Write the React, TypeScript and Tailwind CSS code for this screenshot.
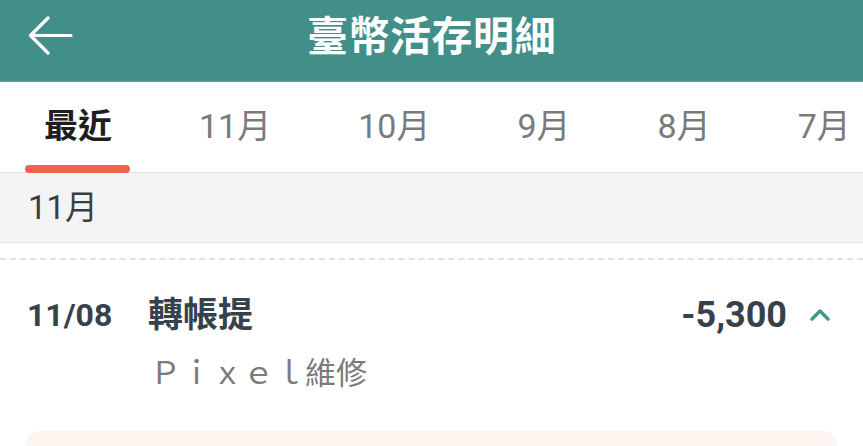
import { ChevronUp } from 'lucide-react';

const tabs = ['最近', '11月', '10月', '9月', '8月', '7月'];

const font = { fontFamily: 'Roboto, "Noto Sans CJK TC", sans-serif' };

function BackArrow() {
  return (
    <svg width="46" height="40" viewBox="0 0 46 40" fill="none">
      <path
        d="M43 19.5H3M20 2 2.5 19.5 20 37"
        stroke="white"
        strokeWidth="3.2"
        strokeLinecap="round"
        strokeLinejoin="round"
      />
    </svg>
  );
}

export default function App() {
  return (
    <div className="h-[446px] w-[863px] overflow-hidden bg-white" style={font}>
      {/* header */}
      <div className="relative flex h-[82px] items-center justify-center border-b border-[#5fa39c] bg-[#428e88] pb-[6px]">
        <div className="absolute left-[28px] top-[16px]">
          <BackArrow />
        </div>
        <h1 className="text-[41px] font-bold leading-none tracking-[0.5px] text-white">
          臺幣活存明細
        </h1>
      </div>

      {/* tabs */}
      <div className="flex h-[90px] items-center gap-[87px] whitespace-nowrap pl-[44px]">
        {tabs.map((t, i) => (
          <div key={t} className="relative flex h-full items-center pb-[2px]">
            <span
              className={
                i === 0
                  ? 'text-[34px] font-bold text-[#1e1e1e]'
                  : 'text-[34px] text-[#7a7a7a]'
              }
            >
              {t}
            </span>
            {i === 0 && (
              <span className="absolute bottom-[-1px] left-[-19px] h-[8px] w-[105px] rounded-full bg-[#ee6350]" />
            )}
          </div>
        ))}
      </div>

      {/* month band */}
      <div className="flex h-[71px] items-center border-y border-[#e0e3e6] bg-[#f4f4f4] pl-[28px]">
        <span className="text-[33px] leading-none text-[#3a3f44]">11月</span>
      </div>

      {/* dashed separator */}
      <div className="mt-[15px] border-t-2 border-dashed border-[#dde3e8]" />

      {/* transaction */}
      <div className="px-[27px] pt-[37px]">
        <div className="flex items-center">
          <span className="w-[121px] text-[32px] font-bold leading-none text-[#35414b]">
            11/08
          </span>
          <span className="text-[35px] font-bold leading-none text-[#35414b]">
            轉帳提
          </span>
          <span className="ml-auto text-[36px] font-bold leading-none text-[#35414b]">
            -5,300
          </span>
          <ChevronUp
            size={32}
            strokeWidth={2.6}
            className="ml-[17px] mr-[0px] text-[#3e9b8b]"
          />
        </div>
        <div className="pl-[123px] pt-[25px] text-[31px] leading-none text-[#7b7b7b]">
          Ｐｉｘｅｌ維修
        </div>
      </div>

      {/* detail card */}
      <div className="mx-[26px] mt-[42px] h-[60px] rounded-[14px] bg-[#fdf5ef]" />
    </div>
  );
}
